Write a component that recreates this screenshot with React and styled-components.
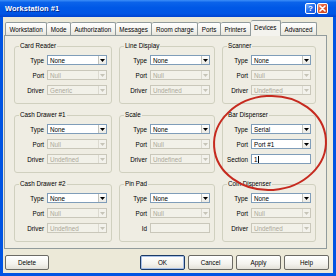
import React from 'react';
import styled, { createGlobalStyle } from 'styled-components';

const Global = createGlobalStyle`
  html, body { margin: 0; padding: 0; background: #ffffff; }
  body {
    width: 336px; height: 276px; overflow: hidden;
    font-family: "Liberation Sans", Arial, sans-serif;
  }
  * { box-sizing: border-box; }
`;

const Window = styled.div`
  position: relative;
  width: 336px;
  height: 276px;
  display: flex;
  flex-direction: column;
`;

const TitleBar = styled.div`
  height: 17px;
  flex: none;
  display: flex;
  align-items: center;
  padding: 0 8px 0 5px;
  background: linear-gradient(to bottom, #3d8ff8 0%, #0b63ea 14%, #0058e6 45%, #0055e5 80%, #0043cf 100%);
`;

const Title = styled.div`
  color: #ffffff;
  font-weight: bold;
  font-size: 7.4px;
  text-shadow: 1px 1px 0 #0a2a8a;
  letter-spacing: 0.1px;
`;

const TitleButtons = styled.div`
  margin-left: auto;
  display: flex;
  gap: 1px;
`;

const CaptionButton = styled.div`
  width: 11px;
  height: 11px;
  border: 1px solid #ffffff;
  border-radius: 2px;
  display: flex;
  align-items: center;
  justify-content: center;
  color: #ffffff;
  font-weight: bold;
  font-size: 8px;
  line-height: 1;
  background: ${p => p.$close
    ? 'linear-gradient(135deg, #f19a7e 0%, #e35a34 40%, #c8401c 100%)'
    : 'linear-gradient(135deg, #7fb2ff 0%, #2a73f0 45%, #1450d8 100%)'};
`;

const Frame = styled.div`
  flex: 1;
  display: flex;
  flex-direction: column;
  background: #ece9d8;
  border: 3px solid #0054e3;
  border-top: none;
  padding: 3px 6px 3px 1px;
`;

const TabRow = styled.div`
  height: 15px;
  flex: none;
  display: flex;
  align-items: flex-end;
  padding-left: 1px;
  position: relative;
  z-index: 1;
`;

const Tab = styled.div`
  height: ${p => (p.$active ? '16px' : '13px')};
  margin-bottom: ${p => (p.$active ? '-1px' : '0')};
  padding: ${p => (p.$active ? '0 3.5px 2px' : '0 3.5px')};
  display: flex;
  align-items: center;
  font-size: 6.3px;
  color: #000000;
  white-space: nowrap;
  border: 1px solid #919b9c;
  border-bottom: none;
  border-left: ${p => (p.$first ? '1px solid #919b9c' : 'none')};
  border-radius: 2px 2px 0 0;
  background: ${p => (p.$active
    ? '#f4f3ee'
    : 'linear-gradient(to bottom, #ffffff, #f1f0ea 70%, #e6e4da)')};
`;

const Panel = styled.div`
  height: 214px;
  flex: none;
  border: 1px solid #919b9c;
  background: #efede3;
  padding: 10px 10px 0 9px;
  display: grid;
  grid-template-columns: 98px 96px 94px;
  grid-auto-rows: 58px;
  column-gap: 7px;
  row-gap: 11px;
`;

const Group = styled.div`
  position: relative;
  border: 1px solid #d0d0bf;
  border-radius: 3px;
  padding: 8px 4px 0 0;
  display: flex;
  flex-direction: column;
  gap: 5px;
`;

const GroupTitle = styled.span`
  position: absolute;
  top: -5px;
  left: 4px;
  padding: 0 1px;
  background: #efede3;
  font-size: 6.3px;
  line-height: 8px;
  color: #000000;
  white-space: nowrap;
`;

const Row = styled.div`
  height: 10px;
  display: flex;
  align-items: center;
  justify-content: flex-end;
  gap: 3px;
`;

const Label = styled.span`
  font-size: 6.3px;
  color: #000000;
  white-space: nowrap;
`;

const Field = styled.div`
  width: 60px;
  height: 10px;
  flex: none;
  display: flex;
  align-items: stretch;
  border: 1px solid ${p => (p.$disabled ? '#c9c7ba' : '#7f9db9')};
  background: ${p => (p.$disabled ? '#f2f1e9' : '#ffffff')};
`;

const Value = styled.span`
  flex: 1;
  display: flex;
  align-items: center;
  padding-left: 2px;
  font-size: 6.3px;
  color: ${p => (p.$disabled ? '#aca899' : '#000000')};
  white-space: nowrap;
  overflow: hidden;
`;

const Caret = styled.span`
  width: 1px;
  height: 7px;
  background: #000000;
  margin-left: 0.5px;
`;

const ArrowButton = styled.span`
  width: 8px;
  flex: none;
  margin: 0;
  display: flex;
  align-items: center;
  justify-content: center;
  border-left: 1px solid ${p => (p.$disabled ? '#dcdad0' : '#c3c3bb')};
  background: ${p => (p.$disabled
    ? '#f3f2ec'
    : 'linear-gradient(to bottom, #ffffff, #ebeae4)')};
`;

const Footer = styled.div`
  height: 15px;
  margin-top: 6px;
  margin-left: 1px;
  margin-right: -2px;
  flex: none;
  display: flex;
  align-items: stretch;
`;

const RightButtons = styled.div`
  margin-left: auto;
  display: flex;
  gap: 3px;
`;

const Button = styled.div`
  width: ${p => p.$w || 45}px;
  display: flex;
  align-items: center;
  justify-content: center;
  font-size: 6.3px;
  color: #000000;
  border: 1px solid ${p => (p.$default ? '#1c3b66' : '#6b6a64')};
  box-shadow: ${p => (p.$default ? 'inset 0 0 0 1px #a9c1e8' : 'none')};
  border-radius: 2px;
  background: linear-gradient(to bottom, #ffffff 0%, #f4f3ee 60%, #e3e1d8 100%);
`;

const Annotation = styled.svg`
  position: absolute;
  left: 0;
  top: 0;
  pointer-events: none;
`;

const Arrow = ({ disabled }) => (
  <svg width="5" height="3" viewBox="0 0 5 3">
    <path d="M0 0 H5 L2.5 3 Z" fill={disabled ? '#c6c4b8' : '#000000'} />
  </svg>
);

const Select = ({ value, disabled }) => (
  <Field $disabled={disabled}>
    <Value $disabled={disabled}>{value}</Value>
    <ArrowButton $disabled={disabled}>
      <Arrow disabled={disabled} />
    </ArrowButton>
  </Field>
);

const TextInput = ({ value, disabled, caret }) => (
  <Field $disabled={disabled}>
    <Value $disabled={disabled}>
      {value}
      {caret && <Caret />}
    </Value>
  </Field>
);

const std = (driver) => [
  { label: 'Type', value: 'None' },
  { label: 'Port', value: 'Null', disabled: true },
  { label: 'Driver', value: driver, disabled: true },
];

const groups = [
  { title: 'Card Reader', rows: std('Generic') },
  { title: 'Line Display', rows: std('Undefined') },
  { title: 'Scanner', rows: std('Undefined') },
  { title: 'Cash Drawer #1', rows: std('Undefined') },
  { title: 'Scale', rows: std('Undefined') },
  {
    title: 'Bar Dispenser',
    rows: [
      { label: 'Type', value: 'Serial' },
      { label: 'Port', value: 'Port #1' },
      { label: 'Section', value: '1', text: true, caret: true },
    ],
  },
  { title: 'Cash Drawer #2', rows: std('Undefined') },
  {
    title: 'Pin Pad',
    rows: [
      { label: 'Type', value: 'None' },
      { label: 'Port', value: 'Null', disabled: true },
      { label: 'Id', value: '', text: true, disabled: true },
    ],
  },
  { title: 'Coin Dispenser', rows: std('Undefined') },
];

const tabs = ['Workstation', 'Mode', 'Authorization', 'Messages', 'Room charge', 'Ports', 'Printers', 'Devices', 'Advanced'];

export default function App() {
  return (
    <>
      <Global />
      <Window>
        <TitleBar>
          <Title>Workstation #1</Title>
          <TitleButtons>
            <CaptionButton>?</CaptionButton>
            <CaptionButton $close>
              <svg width="7" height="7" viewBox="0 0 7 7">
                <path d="M1 1 L6 6 M6 1 L1 6" stroke="#ffffff" strokeWidth="1.6" strokeLinecap="round" />
              </svg>
            </CaptionButton>
          </TitleButtons>
        </TitleBar>
        <Frame>
          <TabRow>
            {tabs.map((t, i) => (
              <Tab key={t} $first={i === 0} $active={t === 'Devices'}>{t}</Tab>
            ))}
          </TabRow>
          <Panel>
            {groups.map(g => (
              <Group key={g.title}>
                <GroupTitle>{g.title}</GroupTitle>
                {g.rows.map(r => (
                  <Row key={r.label}>
                    <Label>{r.label}</Label>
                    {r.text
                      ? <TextInput value={r.value} disabled={r.disabled} caret={r.caret} />
                      : <Select value={r.value} disabled={r.disabled} />}
                  </Row>
                ))}
              </Group>
            ))}
          </Panel>
          <Footer>
            <Button $w={44}>Delete</Button>
            <RightButtons>
              <Button $default>OK</Button>
              <Button>Cancel</Button>
              <Button>Apply</Button>
              <Button>Help</Button>
            </RightButtons>
          </Footer>
        </Frame>
        <Annotation width="336" height="276" viewBox="0 0 336 276">
          <ellipse cx="270" cy="143" rx="56" ry="47" fill="none" stroke="#c62a1f" strokeWidth="2" transform="rotate(-4 270 143)" />
        </Annotation>
      </Window>
    </>
  );
}
